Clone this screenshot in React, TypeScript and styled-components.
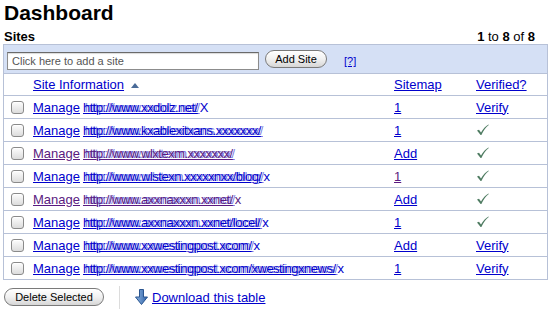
import React from "react";
import styled, { createGlobalStyle } from "styled-components";

const GlobalStyle = createGlobalStyle`
  html, body {
    margin: 0;
    padding: 0;
    background: #fff;
    font-family: "Liberation Sans", Arial, sans-serif;
    color: #000;
  }
`;

type Site = {
  url: string;
  tail: string;
  sitemap: string;
  verified: boolean;
  visited?: boolean;
  sitemapVisited?: boolean;
};

// addresses are scribbled over in the screenshot
const sites: Site[] = [
  { url: "http://www.xxdolz.net/", tail: "X", sitemap: "1", verified: false },
  { url: "http://www.kxablexitxans.xxxxxxx/", tail: "", sitemap: "1", verified: true },
  { url: "http://www.wlxtexm.xxxxxxx/", tail: "", sitemap: "Add", verified: true, visited: true },
  { url: "http://www.wlstexn.xxxxxnxx/blog/", tail: "x", sitemap: "1", verified: true, sitemapVisited: true },
  { url: "http://www.axxnaxxxn.xxnet/", tail: "x", sitemap: "Add", verified: true, visited: true },
  { url: "http://www.axxnaxxxn.xxnet/locel/", tail: "x", sitemap: "1", verified: true },
  { url: "http://www.xxwestingpost.xcom/", tail: "x", sitemap: "Add", verified: false },
  { url: "http://www.xxwestingpost.xcom/xwestingxnews/", tail: "x", sitemap: "1", verified: false },
];

const Page = styled.div`
  padding: 0 3px;
  width: 545px;
`;

const Title = styled.h1`
  margin: 0;
  padding: 1px 0 0 1px;
  font-size: 21px;
  line-height: 24px;
  font-weight: bold;
`;

const TopLine = styled.div`
  display: flex;
  justify-content: space-between;
  align-items: flex-end;
  height: 19px;
  padding: 0 13px 0 1px;
  font-size: 13px;
  line-height: 15px;
`;

const SitesLabel = styled.span`
  font-weight: bold;
`;

const Bold = styled.b`
  font-weight: bold;
`;

const Box = styled.div`
  border: 1px solid #b7c1d7;
`;

const Toolbar = styled.div`
  display: flex;
  align-items: center;
  height: 28px;
  padding: 0 0 0 3px;
  background: #d5e0f5;
  border-bottom: 1px solid #b7c1d7;
`;

const SiteInput = styled.input`
  box-sizing: border-box;
  width: 252px;
  height: 18px;
  margin: 3px 0 0 0;
  padding: 0 4px;
  border: 1px solid #8c8c8c;
  border-top-color: #6a6a6a;
  background: #fff;
  box-shadow: inset 0 1px 1px rgba(0, 0, 0, 0.15);
  font-family: "Liberation Sans", Arial, sans-serif;
  font-size: 11px;
  color: #555;
  &::placeholder {
    color: #555;
  }
`;

const Pill = styled.button<{ $w: number }>`
  box-sizing: border-box;
  width: ${(p) => p.$w}px;
  height: 18px;
  padding: 0;
  border: 1px solid #7a7a7a;
  border-radius: 9px;
  background: linear-gradient(#ffffff 0%, #f1f1f1 50%, #d6d6d6 100%);
  box-shadow: inset 0 1px 0 #fff;
  font-family: "Liberation Sans", Arial, sans-serif;
  font-size: 11px;
  line-height: 16px;
  color: #000;
`;

const AddPill = styled(Pill)`
  margin: 0 0 0 6px;
`;

const Help = styled.a`
  margin: 4px 0 0 17px;
  font-size: 11px;
  color: #00c;
  text-decoration: underline;
`;

const Grid = styled.div`
  display: grid;
  grid-template-columns: 26px 361px 82px 74px;
  font-size: 13px;
  line-height: 15px;
`;

const Cell = styled.div<{ $head?: boolean; $first?: boolean }>`
  display: flex;
  align-items: center;
  height: ${(p) => (p.$head ? 21 : 22)}px;
  padding-left: ${(p) => (p.$first ? 0 : 3)}px;
  border-top: ${(p) => (p.$head ? "none" : "1px solid #b7c1d7")};
  white-space: nowrap;
`;

const Link = styled.a<{ $visited?: boolean }>`
  color: ${(p) => (p.$visited ? "#5a1a80" : "#00c")};
  text-decoration: underline;
  cursor: pointer;
`;

const SortArrow = styled.span`
  display: inline-block;
  margin: 2px 0 0 7px;
  width: 0;
  height: 0;
  border-left: 4px solid transparent;
  border-right: 4px solid transparent;
  border-bottom: 5px solid #4a6b98;
`;

const Check = styled.span`
  display: inline-block;
  box-sizing: border-box;
  width: 13px;
  height: 13px;
  margin-left: 7px;
  border: 1px solid #8a8a8a;
  border-radius: 3px;
  background: linear-gradient(#fdfdfd, #dcdcdc);
  box-shadow: inset 0 1px 0 #fff;
`;

const Scribbled = styled.span`
  margin-left: 3px;
  letter-spacing: -0.5px;
  text-shadow: 2px 0 0 rgba(0, 0, 204, 0.55);
`;

const Tail = styled.span<{ $visited?: boolean }>`
  margin-left: 2px;
  color: ${(p) => (p.$visited ? "#5a1a80" : "#00c")};
`;

const Footer = styled.div`
  display: flex;
  align-items: center;
  margin-top: 5px;
  height: 24px;
`;

const DeletePill = styled(Pill)`
  margin-left: 1px;
`;

const Divider = styled.div`
  width: 1px;
  height: 23px;
  margin: 0 15px;
  background: #dcdcdc;
`;

const DownloadLink = styled(Link)`
  display: flex;
  align-items: center;
  gap: 4px;
  font-size: 13px;
`;

const CheckMark = () => (
  <svg width="13" height="12" viewBox="0 0 13 12">
    <path
      d="M1 6.5 L3 5.8 L5 8.6 C7 5 9.5 2 12.5 0.5 L12.8 1 C10 3 7.6 6.6 5.4 11 L4.6 11 Z"
      fill="#4f7c62"
    />
  </svg>
);

const DownArrow = () => (
  <svg width="13" height="16" viewBox="0 0 13 16">
    <defs>
      <linearGradient id="arrowFill" x1="0" x2="1" y1="0" y2="0">
        <stop offset="0" stopColor="#8fb4e0" />
        <stop offset="1" stopColor="#2d62a8" />
      </linearGradient>
    </defs>
    <path
      d="M4.5 0.5 H8.5 V8 H12.5 L6.5 15.5 L0.5 8 H4.5 Z"
      fill="url(#arrowFill)"
      stroke="#2a5590"
      strokeWidth="1"
      strokeLinejoin="round"
    />
  </svg>
);

export default function App() {
  return (
    <Page>
      <GlobalStyle />
      <Title>Dashboard</Title>
      <TopLine>
        <SitesLabel>Sites</SitesLabel>
        <span>
          <Bold>1</Bold> to <Bold>8</Bold> of <Bold>8</Bold>
        </span>
      </TopLine>
      <Box>
        <Toolbar>
          <SiteInput placeholder="Click here to add a site" />
          <AddPill $w={62}>Add Site</AddPill>
          <Help>[?]</Help>
        </Toolbar>
        <Grid>
          <Cell $head $first />
          <Cell $head>
            <Link>Site Information</Link>
            <SortArrow />
          </Cell>
          <Cell $head>
            <Link>Sitemap</Link>
          </Cell>
          <Cell $head>
            <Link>Verified?</Link>
          </Cell>
          {sites.map((s, i) => (
            <React.Fragment key={i}>
              <Cell $first>
                <Check />
              </Cell>
              <Cell>
                <Link $visited={s.visited}>
                  Manage<Scribbled>{s.url}</Scribbled>
                </Link>
                {s.tail && <Tail $visited={s.visited}>{s.tail}</Tail>}
              </Cell>
              <Cell>
                <Link $visited={s.sitemapVisited}>{s.sitemap}</Link>
              </Cell>
              <Cell>{s.verified ? <CheckMark /> : <Link>Verify</Link>}</Cell>
            </React.Fragment>
          ))}
        </Grid>
      </Box>
      <Footer>
        <DeletePill $w={100}>Delete Selected</DeletePill>
        <Divider />
        <DownloadLink>
          <DownArrow />
          Download this table
        </DownloadLink>
      </Footer>
    </Page>
  );
}
